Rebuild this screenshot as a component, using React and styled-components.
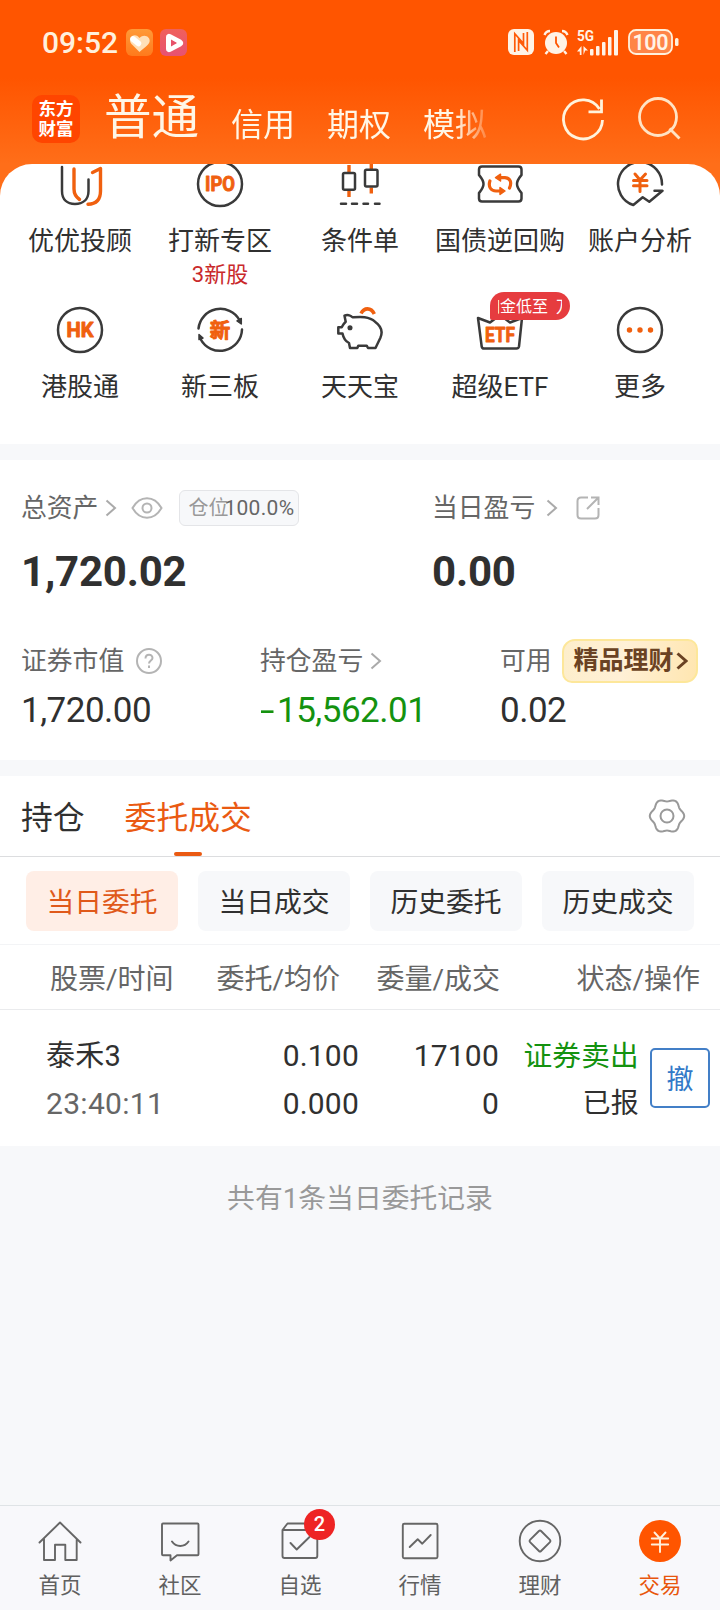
import styled, { createGlobalStyle } from 'styled-components';

const GlobalStyle = createGlobalStyle`
  body {
    margin: 0;
    background: #f7f8fa;
    color: #303030;
    font-family: Roboto, 'Noto Sans CJK SC', sans-serif;
  }
  svg {
    display: block;
    flex: none;
  }
`;

const Page = styled.div`
  display: flex;
  flex-direction: column;
  width: 720px;
  height: 1610px;
  overflow: hidden;
  background: #f7f8fa;
`;

/* header */
const Header = styled.header`
  height: 196px;
  margin-bottom: -32px;
  background: linear-gradient(#ff5500 0, #ff5500 78px, #ff6e19 164px);
`;
const StatusBar = styled.div`
  display: flex;
  align-items: center;
  height: 84px;
  padding: 0 41px 0 42px;
  box-sizing: border-box;
`;
const Clock = styled.span`
  width: 84px;
  color: #fff0dc;
  font-size: 30px;
  font-weight: 500;
`;
const AppBadge = styled.span`
  display: flex;
  width: 27px;
  height: 27px;
  margin-right: 7px;
  border-radius: 6px;
  background: ${({ $bg }) => $bg};
`;
const StatusRight = styled.div`
  display: flex;
  align-items: center;
  margin-left: auto;
`;
const TitleRow = styled.div`
  display: flex;
  height: 80px;
  padding: 11px 38px 0 32px;
  box-sizing: border-box;
`;
const Logo = styled.div`
  width: 48px;
  height: 48px;
  padding-top: 5px;
  box-sizing: border-box;
  border-radius: 10px;
  background: #ff4500;
  color: #fff;
  font-size: 17.5px;
  font-weight: 700;
  line-height: 19.5px;
  text-align: center;
`;
const Modes = styled.div`
  display: flex;
  gap: 32px;
  width: 383px;
  height: 69px;
  margin: -11px 0 0 24px;
  white-space: nowrap;
  mask-image: linear-gradient(90deg, #000 352px, transparent 392px);
`;
const Mode = styled.span`
  padding-top: ${({ $active }) => ($active ? 0 : 6)}px;
  color: #fff6e6;
  font-size: ${({ $active }) => ($active ? 47.5 : 32)}px;
  line-height: ${({ $active }) => ($active ? 69 : 70)}px;
`;
const HeaderIcons = styled.div`
  display: flex;
  gap: 27px;
  margin-left: auto;
`;

/* shortcuts */
const Shortcuts = styled.section`
  height: 280px;
  border-radius: 32px 32px 0 0;
  background: #fff;
  overflow: hidden;
`;
const ShortcutGrid = styled.div`
  display: grid;
  grid-template-columns: repeat(5, 140px);
  grid-auto-rows: 146px;
  padding: 0 10px;
  margin-top: -4px;
`;
const Shortcut = styled.div`
  position: relative;
  display: flex;
  flex-direction: column;
  align-items: center;
`;
const ShortcutLabel = styled.span`
  margin-top: 15px;
  font-size: 26px;
  line-height: 36px;
  white-space: nowrap;
`;
const ShortcutNote = styled.span`
  color: #c9292b;
  font-size: 22px;
  line-height: 31px;
`;
const Promo = styled.span`
  position: absolute;
  left: 60px;
  top: -14px;
  width: 80px;
  height: 28px;
  padding: 0 8px;
  box-sizing: border-box;
  border-radius: 14px 14px 14px 2px;
  background: #e63c3f;
`;
const PromoText = styled.span`
  display: flex;
  overflow: hidden;
  color: #fff;
  font-size: 16px;
  line-height: 29px;
  white-space: pre;
  text-indent: -14px;
`;

/* assets */
const Assets = styled.section`
  height: 300px;
  margin-top: 16px;
  padding-top: 26px;
  box-sizing: border-box;
  background: #fff;
`;
const AssetRow = styled.div`
  display: grid;
  grid-template-columns: ${({ $columns }) => $columns};
  padding-left: 21px;
  margin-bottom: ${({ $gap = 0 }) => $gap}px;
`;
const AssetLabel = styled.div`
  display: flex;
  align-items: center;
  height: 44px;
  color: #666;
  font-size: 25.8px;
  line-height: 36px;
  white-space: nowrap;
  svg {
    margin-left: ${({ $iconGap = 7 }) => $iconGap}px;
  }
`;
const Total = styled.div`
  height: 64px;
  margin-top: 7px;
  padding-top: 3px;
  box-sizing: border-box;
  font-size: 42px;
  font-weight: 700;
  line-height: 64px;
  letter-spacing: -0.2px;
`;
const Amount = styled.div`
  margin-top: 3px;
  color: ${({ $color = '#303030' }) => $color};
  font-size: 35px;
  line-height: 50px;
  letter-spacing: -0.5px;
`;
const Minus = styled.span`
  display: inline-block;
  width: 17px;
  transform: scaleX(1.5);
  transform-origin: left;
`;
const PositionTag = styled.span`
  display: flex;
  align-items: center;
  width: 120px;
  height: 36px;
  margin-left: 16px;
  padding-left: 8px;
  box-sizing: border-box;
  border: 1px solid #e4e5e8;
  border-radius: 6px;
  background: #f7f8fa;
  color: #999;
  font-size: 20px;
`;
const PositionValue = styled.span`
  margin-left: -4px;
  color: #666;
  font-size: 21px;
  letter-spacing: 0.3px;
`;
const PremiumTag = styled.span`
  display: flex;
  align-items: center;
  width: 136px;
  height: 44px;
  margin-left: 10px;
  padding-left: 10px;
  box-sizing: border-box;
  border: 2px solid #fde79a;
  border-radius: 13px 10px 13px 10px;
  background: linear-gradient(100deg, #fdeecb, #fff0d6 45%, #ffe6b0);
  color: #6a4223;
  font-size: 25px;
  font-weight: 700;
  svg {
    margin-left: 2px;
  }
`;

/* orders */
const Orders = styled.section`
  height: 370px;
  margin-top: 16px;
  background: #fff;
`;
const Tabs = styled.div`
  display: flex;
  height: 81px;
  padding: 0 33px 0 21px;
  box-sizing: border-box;
  border-bottom: 1px solid #dcdddf;
`;
const Tab = styled.div`
  display: flex;
  flex-direction: column;
  align-items: center;
  margin-right: 40px;
  padding-top: 4px;
  height: 80px;
  box-sizing: border-box;
  color: ${({ $active }) => ($active ? '#ea5a12' : '#303030')};
  font-size: 31.8px;
  line-height: 76px;
  &::after {
    content: '';
    flex: none;
    width: 28px;
    height: 4px;
    margin-top: -4px;
    border-radius: 2px;
    background: ${({ $active }) => ($active ? '#ea5a12' : 'transparent')};
  }
`;
const TabSettings = styled.div`
  margin: 20px 0 0 auto;
`;
const Chips = styled.div`
  display: flex;
  gap: 20px;
  height: 88px;
  padding: 14px 26px 0;
  box-sizing: border-box;
  border-bottom: 1px solid #f3f4f6;
`;
const Chip = styled.div`
  width: 152px;
  height: 60px;
  border-radius: 8px;
  background: ${({ $active }) => ($active ? '#ffeee6' : '#f7f8fa')};
  color: ${({ $active }) => ($active ? '#e0591a' : '#303030')};
  font-size: 27.8px;
  line-height: 64px;
  text-align: center;
`;
const TableHead = styled.div`
  display: grid;
  grid-template-columns: 123px 167px 160px 200px;
  height: 65px;
  padding-left: 50px;
  box-sizing: border-box;
  border-bottom: 1px solid #eaebed;
  color: #666;
  font-size: 28px;
  line-height: 70px;
  text-align: right;
  white-space: nowrap;
`;
const OrderRow = styled.div`
  display: flex;
  align-items: flex-start;
  padding: 22px 10px 0 46px;
`;
const OrderCell = styled.div`
  width: ${({ $width }) => $width}px;
  font-size: 30px;
  line-height: 48px;
  text-align: ${({ $left }) => ($left ? 'left' : 'right')};
`;
const Line = styled.div`
  color: ${({ $color = 'inherit' }) => $color};
  font-size: ${({ $size = 30 }) => $size}px;
  letter-spacing: ${({ $spacing = 0.2 }) => $spacing}px;
`;
const CancelButton = styled.button`
  width: 60px;
  height: 60px;
  margin: 16px 0 0 auto;
  padding: 0;
  border: 2px solid #437fc7;
  border-radius: 5px;
  background: #fff;
  color: #3379c8;
  font: 27px/56px 'Noto Sans CJK SC', sans-serif;
`;
const Summary = styled.p`
  flex: 1;
  margin: 0;
  padding-top: 33px;
  color: #999;
  font-size: 27.8px;
  line-height: 40px;
  text-align: center;
`;

/* bottom navigation */
const BottomNav = styled.nav`
  display: grid;
  grid-template-columns: repeat(6, 1fr);
  height: 105px;
  padding-top: 11px;
  box-sizing: border-box;
  border-top: 1px solid #dfe3e6;
  background: #f8f8fb;
`;
const NavItem = styled.div`
  position: relative;
  display: flex;
  flex-direction: column;
  align-items: center;
  color: ${({ $active }) => ($active ? '#e8560c' : '#606060')};
  font-size: 21.5px;
  line-height: 41px;
`;
const Count = styled.span`
  position: absolute;
  left: 64px;
  top: -8px;
  width: 31px;
  height: 31px;
  border-radius: 50%;
  background: #ee2424;
  color: #fff;
  font-size: 20px;
  font-weight: 500;
  line-height: 31px;
  text-align: center;
`;

const DARK = '#3a3a3a';
const ORANGE = '#f0600f';

const Icon = ({ size = 48, children, ...props }) => (
  <svg
    width={size}
    height={size}
    viewBox={`0 0 ${size} ${size}`}
    fill="none"
    stroke={DARK}
    strokeWidth="2.5"
    strokeLinecap="round"
    strokeLinejoin="round"
    {...props}
  >
    {children}
  </svg>
);

const IconText = ({ y, size, width, children }) => (
  <text
    x="24"
    y={y}
    fill={ORANGE}
    stroke={ORANGE}
    strokeWidth="0.9"
    fontSize={size}
    fontWeight="700"
    textAnchor="middle"
    textLength={width}
    lengthAdjust="spacingAndGlyphs"
  >
    {children}
  </text>
);

const Chevron = ({ color = '#aaa', width = 2 }) => (
  <svg width="12" height="18" fill="none" stroke={color} strokeWidth={width}>
    <path d="M1.5 1.5L10 9L1.5 16.5" />
  </svg>
);

const gearPath = () => {
  const points = [];
  for (let deg = 0; deg < 360; deg += 4) {
    const a = (deg * Math.PI) / 180;
    const r = 15.9 + 1.3 * Math.cos(6 * a);
    points.push(
      `${(20 + r * Math.cos(a)).toFixed(2)} ${(20 + r * Math.sin(a)).toFixed(2)}`
    );
  }
  return `M${points.join('L')}Z`;
};

const shortcuts = [
  {
    label: '优优投顾',
    icon: (
      <Icon>
        <path d="M6 7V31C6 39.500 11 44 19 44S32.500 39.500 32.500 31V19.500" />
        <path
          d="M18 9V29C18 34 20 37 23.500 39.500M36.500 12.500L44.500 8.500V31C44.500 40 40 44 32 44.300"
          stroke={ORANGE}
          strokeWidth="3.4"
        />
      </Icon>
    ),
  },
  {
    label: '打新专区',
    note: '3新股',
    icon: (
      <Icon>
        <circle cx="24" cy="24" r="22" />
        <IconText y="31" size="20" width="30">
          IPO
        </IconText>
      </Icon>
    ),
  },
  {
    label: '条件单',
    icon: (
      <Icon>
        <path
          d="M13 5V12M13 31V37M35.300 2V9M35.300 27.500V33.500"
          stroke={ORANGE}
          strokeWidth="3.4"
          strokeLinecap="butt"
        />
        <rect x="7" y="13" width="12" height="16.700" rx="1.500" />
        <rect x="29" y="9.700" width="12.500" height="16.700" rx="1.500" />
        <path d="M5 43.700H10M16 43.700H21M27.500 43.700H32M39 43.700H43.500" />
      </Icon>
    ),
  },
  {
    label: '国债逆回购',
    icon: (
      <Icon>
        <path d="M6 6.500H42.500Q45.500 6.500 45.500 9.500V15C43.500 17.500 41 20 41 24S43.500 30.500 45.500 33V38.500Q45.500 41.500 42.500 41.500H6Q3 41.500 3 38.500V33C5 30.500 7.500 28 7.500 24S5 17.500 3 15V9.500Q3 6.500 6 6.500Z" />
        <path
          d="M24 17.600H29C34.500 18 36 22.500 33.500 28M13.900 21C12 27 15 31 20 31H24"
          stroke={ORANGE}
          strokeWidth="3.2"
        />
        <path
          d="M24.500 14.200L19.500 17.600L24.500 21ZM24 27.600L29 31L24 34.400Z"
          fill={ORANGE}
          stroke={ORANGE}
          strokeWidth="1.500"
        />
      </Icon>
    ),
  },
  {
    label: '账户分析',
    icon: (
      <Icon>
        <path d="M46 24.500A22 22 0 1 0 17.300 45L26.700 37.300L33.300 41.700L46.500 30.700H38.500" />
        <path
          d="M19 14L24 20L29.500 14M24 20V31.500M17.500 20.500H31M17.500 25.700H31"
          stroke={ORANGE}
          strokeWidth="3"
        />
      </Icon>
    ),
  },
  {
    label: '港股通',
    icon: (
      <Icon>
        <circle cx="24" cy="24" r="22" />
        <IconText y="31" size="20" width="27">
          HK
        </IconText>
      </Icon>
    ),
  },
  {
    label: '新三板',
    icon: (
      <Icon>
        <path d="M2.500 22.500A22 22 0 0 1 43.500 14M46 23.500A22 22 0 0 1 4.500 33" />
        <path
          d="M41 15L45.300 12.500V18ZM3 28.500L7 32L3 33.500Z"
          fill={DARK}
          strokeWidth="1.500"
        />
        <IconText y="31.500" size="20.500">
          新
        </IconText>
      </Icon>
    ),
  },
  {
    label: '天天宝',
    icon: (
      <Icon>
        <path d="M8.500 9.700C11 8.500 14.500 9 16.500 11.300C24 10.800 33 10 39 15.700C45 20 47 26 44.300 32L39.500 42H32L30.700 39.700H22.300L21.300 42H14L13 37C10 35.500 7.500 32.500 6.500 27.500H2.300V21.300H5.700C7 18.500 8 17.200 9.700 15.700Z" />
        <circle cx="14" cy="21.700" r="1.300" fill={DARK} />
        <path
          d="M25 7.500C28 1.500 35 1 38.300 8"
          stroke={ORANGE}
          strokeWidth="3.6"
          strokeLinecap="butt"
        />
      </Icon>
    ),
  },
  {
    label: '超级ETF',
    promo: '佣金低至  万',
    icon: (
      <Icon>
        <path d="M2 12L5.700 40.500Q6 42.500 8 42.500H40.500Q42.500 42.500 43 40.500L46 12L34 16.500L24 9L14 16.500Z" />
        <IconText y="35.500" size="20" width="30">
          ETF
        </IconText>
      </Icon>
    ),
  },
  {
    label: '更多',
    icon: (
      <Icon>
        <circle cx="24" cy="24" r="22" />
        <path
          d="M13.500 24H13.510M24 24H24.010M34.500 24H34.510"
          stroke={ORANGE}
          strokeWidth="5.400"
        />
      </Icon>
    ),
  },
];

const navItems = [
  {
    label: '首页',
    icon: <path d="M3.500 25.500L24 5.500L44.500 25.500M8 22V43H19V27.700H29.300V43H40.700V22" />,
  },
  {
    label: '社区',
    icon: (
      <path d="M7 6.500H41.500Q42.500 6.500 42.500 7.500V37.300Q42.500 38.300 41.500 38.300H21L14.500 43.500V38.300H7Q6 38.300 6 37.300V7.500Q6 6.500 7 6.500ZM16 24.500C20 30.500 28.500 30.500 32.500 24.500" />
    ),
  },
  {
    label: '自选',
    count: 2,
    icon: (
      <path d="M6.500 13V39Q6.500 41 8.500 41H39.300Q41.300 41 41.300 39V13ZM6.500 13L11.500 6.500H37L41.300 13M14.500 26L20.700 32.500L33.500 20" />
    ),
  },
  {
    label: '行情',
    icon: (
      <>
        <rect x="6.800" y="6.800" width="34.700" height="34.500" rx="1.500" />
        <path d="M13.700 30L21.700 22.300L26.300 26.700L34.700 18" />
      </>
    ),
  },
  {
    label: '理财',
    icon: (
      <>
        <circle cx="24" cy="24" r="20.300" />
        <rect x="16.200" y="16.200" width="15.600" height="15.600" rx="1.500" transform="rotate(45 24 24)" />
      </>
    ),
  },
  {
    label: '交易',
    active: true,
    icon: (
      <>
        <circle cx="24" cy="24" r="21" fill="#ff5500" stroke="none" />
        <path
          d="M18.500 15.500L24 21.500L29.500 15.500M24 21.500V35M15.800 21.500H32.200M15.800 27.500H32.200"
          stroke="#fff0dc"
        />
      </>
    ),
  },
];

const StatusIcons = () => (
  <StatusRight>
    <svg width="26" height="26" viewBox="0 0 26 26">
      <rect width="26" height="26" rx="6" fill="#fff3e6" />
      <path
        d="M6.800 23V4.800L15.500 14.500V4M19.300 3V21.200L10.600 11.500V22"
        fill="none"
        stroke="#ff5a08"
        strokeWidth="1.700"
      />
    </svg>
    <svg width="26" height="26" viewBox="0 0 26 26" style={{ marginLeft: 9 }}>
      <circle cx="13" cy="14" r="11" fill="#fff3e6" />
      <path
        d="M1.500 6Q3 2 7 2M24.500 6Q23 2 19 2M5 22L2.500 25M21 22L23.500 25"
        fill="none"
        stroke="#fff3e6"
        strokeWidth="2.400"
      />
      <path d="M13 7.500V14L16 18.500" fill="none" stroke="#ff5500" strokeWidth="1.800" />
    </svg>
    <svg width="42" height="27" viewBox="0 0 42 27" style={{ marginLeft: 8 }} fill="#fff3e6">
      <text x="0" y="12" fontSize="15.500" fontWeight="700" textLength="17" lengthAdjust="spacingAndGlyphs">
        5G
      </text>
      <path d="M4.500 17V26H2.800V22.500H0ZM6.500 26V17L11 21.500H8.200L6.500 26Z" />
      <rect x="13" y="20" width="3.500" height="6.500" rx="1" />
      <rect x="19" y="17" width="3.500" height="9.500" rx="1" />
      <rect x="25" y="13" width="3.500" height="13.500" rx="1" />
      <rect x="31" y="8" width="3.500" height="18.500" rx="1" />
      <rect x="37" y="1" width="4" height="25.500" rx="1" />
    </svg>
    <svg width="51" height="26" viewBox="0 0 51 26" style={{ marginLeft: 9 }}>
      <rect x="1" y="1" width="43" height="24" rx="7" fill="#ff8447" stroke="#fff0dc" strokeWidth="1.800" />
      <rect x="47" y="9" width="3.500" height="8" rx="1.500" fill="#fff0dc" />
      <text x="22.500" y="20.500" fill="#fff3e6" fontSize="21.500" fontWeight="600" textAnchor="middle" textLength="36">
        100
      </text>
    </svg>
  </StatusRight>
);

const App = () => {
  return (
    <Page>
      <GlobalStyle />
      <Header>
        <StatusBar>
          <Clock>09:52</Clock>
          <AppBadge $bg="linear-gradient(#ff9a38, #ff7a1c)">
            <svg width="27" height="27" viewBox="0 0 27 27">
              <path
                d="M13.500 23L5.500 15C1.500 10 6.500 4 11.500 7L13.500 9C18 4 25 8 23.500 13C22.500 16 17 20 13.500 23Z"
                fill="#ffe0b8"
              />
              <path d="M7 10L12.500 14.500" stroke="#fff" strokeWidth="5.500" strokeLinecap="round" />
            </svg>
          </AppBadge>
          <AppBadge $bg="linear-gradient(#f0605c, #e75272)">
            <svg width="27" height="27" viewBox="0 0 27 27">
              <path
                d="M8.500 8Q8.500 7 9.500 7.500L20 13Q21.500 14 20 15L9.500 20.500Q8.500 21 8.500 20Z"
                fill="none"
                stroke="#fff"
                strokeWidth="5"
                strokeLinejoin="round"
              />
              <path d="M11 10.500L17 14L11 17.500Z" fill="#e7526a" />
            </svg>
          </AppBadge>
          <StatusIcons />
        </StatusBar>
        <TitleRow>
          <Logo>
            东方
            <br />
            财富
          </Logo>
          <Modes>
            <Mode $active>普通</Mode>
            <Mode>信用</Mode>
            <Mode>期权</Mode>
            <Mode>模拟</Mode>
          </Modes>
          <HeaderIcons>
            <Icon stroke="#fff3dc" strokeWidth="2.800" strokeLinecap="butt" strokeLinejoin="miter">
              <path d="M43.500 25A19.500 19.500 0 1 1 40.500 14M42.500 4.500V16.800H29.500" />
            </Icon>
            <Icon stroke="#ffe3c4" strokeWidth="2.800" strokeLinecap="butt">
              <circle cx="24" cy="22" r="18.500" />
              <path d="M35.500 33.500L45.500 43.500" />
            </Icon>
          </HeaderIcons>
        </TitleRow>
      </Header>

      <Shortcuts>
        <ShortcutGrid>
          {shortcuts.map(({ label, icon, note, promo }) => (
            <Shortcut key={label}>
              {icon}
              <ShortcutLabel>{label}</ShortcutLabel>
              {note && <ShortcutNote>{note}</ShortcutNote>}
              {promo && (
                <Promo>
                  <PromoText>{promo}</PromoText>
                </Promo>
              )}
            </Shortcut>
          ))}
        </ShortcutGrid>
      </Shortcuts>

      <Assets>
        <AssetRow $columns="411px 1fr" $gap={38}>
          <div>
            <AssetLabel>
              总资产
              <Chevron />
              <svg width="32" height="22" fill="none" stroke="#b4b4b4" strokeWidth="2" style={{ marginLeft: 14 }}>
                <path d="M1.500 11C9-2 23-2 30.500 11C23 24 9 24 1.500 11Z" />
                <circle cx="16" cy="11" r="4.500" />
              </svg>
              <PositionTag>
                仓位<PositionValue>100.0%</PositionValue>
              </PositionTag>
            </AssetLabel>
            <Total>1,720.02</Total>
          </div>
          <div>
            <AssetLabel $iconGap={11}>
              当日盈亏
              <Chevron />
              <svg width="24" height="24" fill="none" stroke="#b4b4b4" strokeWidth="2" style={{ marginLeft: 18 }}>
                <path d="M12 1.500H5Q1.500 1.500 1.500 5V19Q1.500 22.500 5 22.500H19Q22.500 22.500 22.500 19V12M11 13L22 2M15 1.500H22.500V9" />
              </svg>
            </AssetLabel>
            <Total>0.00</Total>
          </div>
        </AssetRow>
        <AssetRow $columns="239px 240px 1fr">
          <div>
            <AssetLabel $iconGap={12}>
              证券市值
              <svg width="26" height="26" fill="none" stroke="#b4b4b4" strokeWidth="2">
                <circle cx="13" cy="13" r="12" />
                <path d="M9.500 10.500C9.500 5.500 16.500 5.500 16.500 10C16.500 12.500 13 12.500 13 15.500M13 17.500V20" />
              </svg>
            </AssetLabel>
            <Amount>1,720.00</Amount>
          </div>
          <div>
            <AssetLabel $iconGap={7}>
              持仓盈亏
              <Chevron />
            </AssetLabel>
            <Amount $color="#14920f">
              <Minus>-</Minus>15,562.01
            </Amount>
          </div>
          <div>
            <AssetLabel>
              可用
              <PremiumTag>
                精品理财
                <Chevron color="#6a4223" width={3} />
              </PremiumTag>
            </AssetLabel>
            <Amount>0.02</Amount>
          </div>
        </AssetRow>
      </Assets>

      <Orders>
        <Tabs>
          <Tab>持仓</Tab>
          <Tab $active>委托成交</Tab>
          <TabSettings>
            <Icon size={40} stroke="#999" strokeWidth="2">
              <path d={gearPath()} />
              <circle cx="20" cy="20" r="6.500" />
            </Icon>
          </TabSettings>
        </Tabs>
        <Chips>
          <Chip $active>当日委托</Chip>
          <Chip>当日成交</Chip>
          <Chip>历史委托</Chip>
          <Chip>历史成交</Chip>
        </Chips>
        <TableHead>
          <span>股票/时间</span>
          <span>委托/均价</span>
          <span>委量/成交</span>
          <span>状态/操作</span>
        </TableHead>
        <OrderRow>
          <OrderCell $width={152} $left>
            <Line $size={29}>泰禾3</Line>
            <Line $color="#666" $spacing={0.3}>
              23:40:11
            </Line>
          </OrderCell>
          <OrderCell $width={161}>
            <Line>0.100</Line>
            <Line>0.000</Line>
          </OrderCell>
          <OrderCell $width={140}>
            <Line>17100</Line>
            <Line>0</Line>
          </OrderCell>
          <OrderCell $width={140}>
            <Line $color="#14920f" $size={28.7}>
              证券卖出
            </Line>
            <Line $size={28}>已报</Line>
          </OrderCell>
          <CancelButton>撤</CancelButton>
        </OrderRow>
      </Orders>

      <Summary>共有1条当日委托记录</Summary>

      <BottomNav>
        {navItems.map(({ label, icon, count, active }) => (
          <NavItem key={label} $active={active}>
            <Icon stroke="#666" strokeWidth="1.900">
              {icon}
            </Icon>
            {label}
            {count && <Count>{count}</Count>}
          </NavItem>
        ))}
      </BottomNav>
    </Page>
  );
};

export default App;
